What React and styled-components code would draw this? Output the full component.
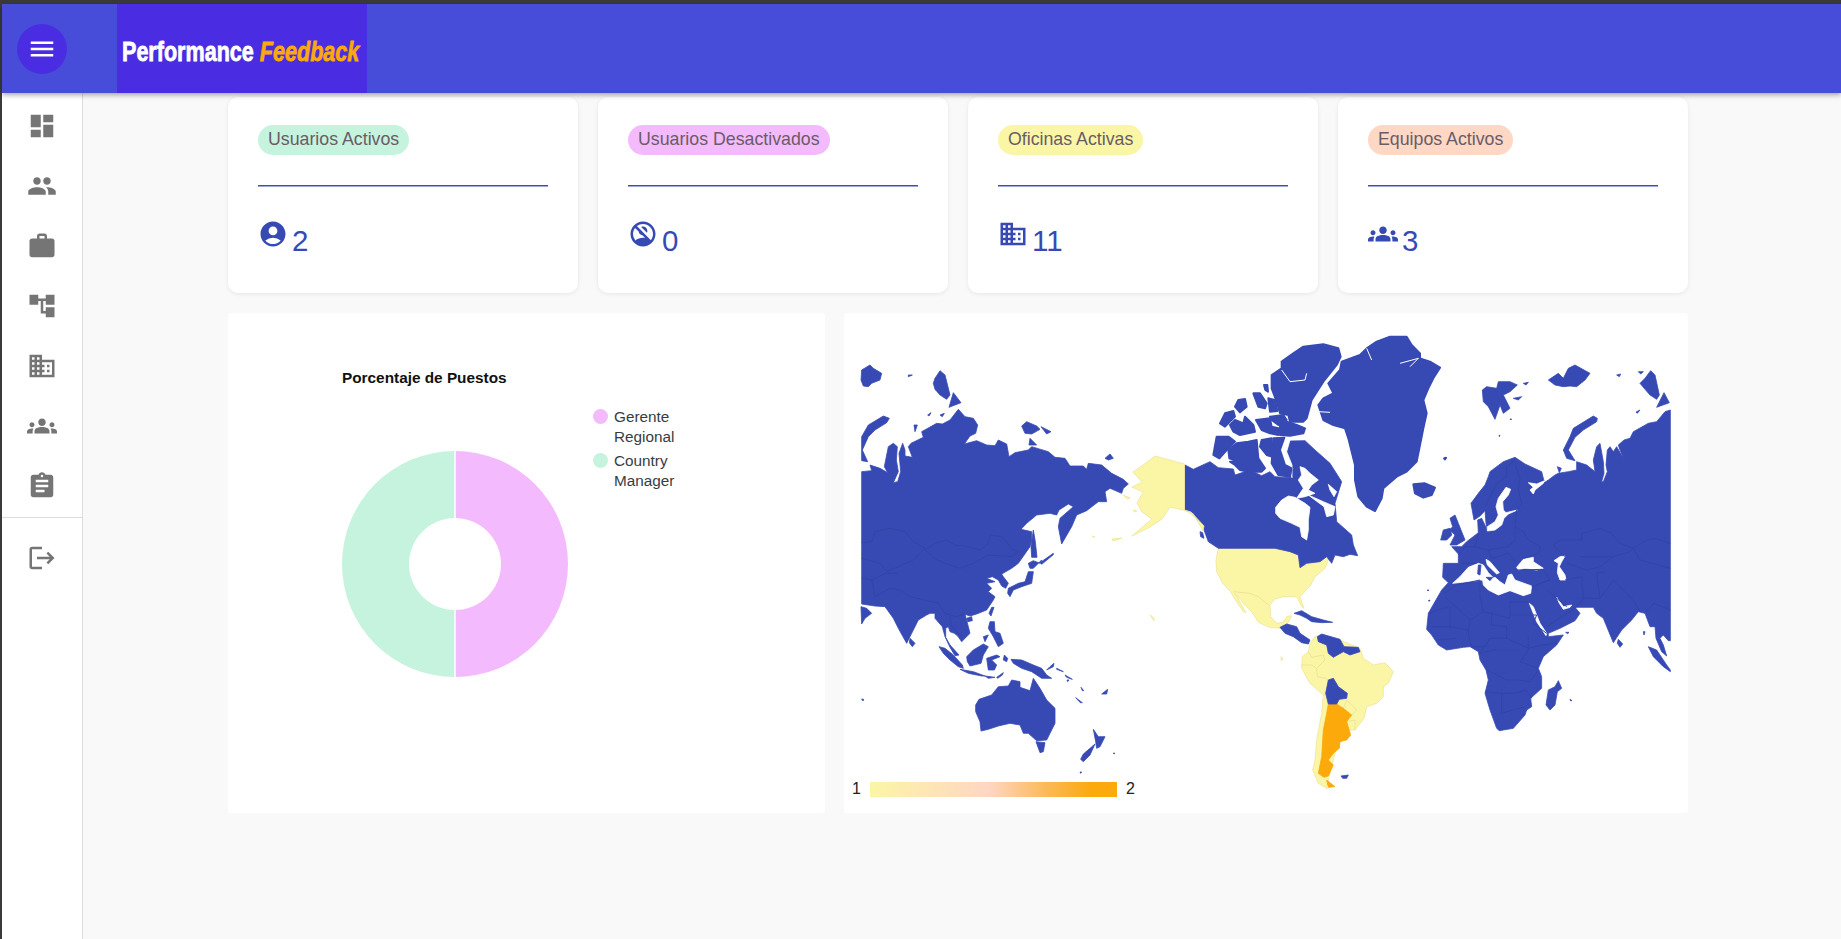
import React from 'react';
import styled, { createGlobalStyle } from 'styled-components';
import {
  MdAccountCircle,
  MdAccountTree,
  MdAssignment,
  MdBusiness,
  MdDashboard,
  MdGroups,
  MdLogout,
  MdMenu,
  MdNoAccounts,
  MdPeople,
  MdWork,
} from 'react-icons/md';

const BLUE = '#374ab4';
const BORDER = '#3044a8';

const GlobalStyle = createGlobalStyle`
  html, body {
    margin: 0;
    padding: 0;
    background: #3a3a3a;
    font-family: "Liberation Sans", Arial, sans-serif;
  }
  * {
    box-sizing: border-box;
  }
`;

const Page = styled.div`
  height: 939px;
  padding: 4px 0 0 2px;
  display: flex;
  flex-direction: column;
  overflow: hidden;
`;

const Header = styled.header`
  flex: 0 0 89px;
  display: flex;
  align-items: center;
  padding-left: 15px;
  background: #474cd9;
  box-shadow: 0 2px 5px rgba(0, 0, 0, 0.35);
  position: relative;
  z-index: 2;
`;

const MenuButton = styled.div`
  width: 50px;
  height: 50px;
  border-radius: 50%;
  background: #4a2de3;
  color: #fff;
  display: flex;
  align-items: center;
  justify-content: center;
  font-size: 30px;
`;

const Logo = styled.div`
  width: 250px;
  height: 89px;
  margin-left: 50px;
  padding: 7px 0 0 5px;
  background: #4a2de3;
  display: flex;
  align-items: center;
  overflow: hidden;
`;

const LogoText = styled.div`
  color: #fff;
  font-size: 28px;
  font-weight: 700;
  white-space: nowrap;
  transform: scaleX(0.77);
  transform-origin: left center;
  -webkit-text-stroke: 0.8px currentColor;

  em {
    color: #fba90b;
  }
`;

const Body = styled.div`
  flex: 1;
  display: flex;
  min-height: 0;
`;

const Sidebar = styled.nav`
  flex: 0 0 81px;
  background: #fff;
  border-right: 1px solid #dcdcdc;
  padding-top: 3px;
  color: #757575;
`;

const NavItem = styled.div`
  height: 60px;
  display: flex;
  align-items: center;
  justify-content: center;
  font-size: 30px;
`;

const NavDivider = styled.div`
  height: 1px;
  margin: 1px 0 10px;
  background: #dcdcdc;
`;

const Main = styled.main`
  flex: 1;
  background: #f9f9f9;
  padding: 4px 153px 0 145px;
`;

const StatGrid = styled.div`
  display: grid;
  grid-template-columns: repeat(4, 350px);
  gap: 20px;
`;

const StatCard = styled.section`
  height: 196px;
  padding: 28px 30px 0;
  background: #fff;
  border-radius: 10px;
  box-shadow: 0 1px 4px rgba(0, 0, 0, 0.08);
`;

const Pill = styled.span`
  display: inline-block;
  height: 30px;
  padding: 0 10px;
  line-height: 28px;
  border-radius: 15px;
  font-size: 17.75px;
  color: #6a5c66;
  background: ${(props) => props.$color};
`;

const Rule = styled.div`
  height: 1px;
  margin-top: 30px;
  background: #3f4eb5;
  box-shadow: 0 0.5px 0 #3f4eb5;
`;

const StatValue = styled.div`
  display: flex;
  align-items: flex-start;
  gap: 4px;
  margin-top: 33px;
  color: ${BLUE};
  font-size: 30px;
  height: 32px;

  span {
    font-size: 29.5px;
    line-height: 29px;
    margin-top: 7px;
  }
`;

const ChartGrid = styled.div`
  display: grid;
  grid-template-columns: 597px 844px;
  gap: 19px;
  margin-top: 20px;
`;

const PieCard = styled.section`
  height: 500px;
  padding-left: 114px;
  display: flex;
  background: #fff;
  border-radius: 3px;
`;

const PieColumn = styled.div`
  width: 251px;
  padding-top: 56px;
`;

const PieTitle = styled.h3`
  margin: 0 0 63px;
  font-size: 15.35px;
  line-height: 18px;
  font-weight: 700;
  color: #111;
`;

const Donut = styled.svg`
  display: block;
  width: 228px;
  height: 228px;
  margin-left: -1px;
`;

const Legend = styled.div`
  padding-top: 94px;
  display: flex;
  flex-direction: column;
  gap: 4px;
`;

const LegendItem = styled.div`
  display: flex;
  gap: 6px;
  font-size: 15.3px;
  line-height: 20px;
  width: 90px;
  color: #373d3f;
`;

const LegendDot = styled.i`
  flex: 0 0 15px;
  height: 15px;
  margin-top: 2px;
  border-radius: 50%;
  background: ${(props) => props.$color};
`;

const MapCard = styled.section`
  height: 500px;
  position: relative;
  background: #fff;
  border-radius: 3px;
`;

const MapSvg = styled.svg`
  display: block;
  width: 844px;
  height: 500px;
`;

const Shape = styled.polygon`
  fill: ${(props) => props.$fill};
  stroke: ${(props) => props.$stroke};
  stroke-width: ${(props) => props.$width || 0.8};
  stroke-linejoin: round;
  vector-effect: non-scaling-stroke;
`;

const Line = styled.polyline`
  fill: none;
  stroke: ${(props) => props.$stroke};
  stroke-width: ${(props) => props.$width || 1};
  stroke-linejoin: round;
  vector-effect: non-scaling-stroke;
`;

const Scale = styled.div`
  position: absolute;
  left: 8px;
  bottom: 15px;
  display: flex;
  align-items: center;
  gap: 9px;
  font-size: 16px;
  color: #222;
`;

const ScaleBar = styled.div`
  width: 247px;
  height: 15px;
  background: linear-gradient(90deg, #fbf6a6 0%, #ffd6c4 48%, #fbb955 72%, #fba90b 90%);
`;

// all map outlines are traced from crops of the map, each frame is one crop (3x)
const frames = [
  {
    x: 855,
    y: 350,
    s: 1 / 3,
    land: [
      '20,365 50,362 45,345 75,355 98,368 88,350 100,290 115,280 127,290 124,330 130,365 115,398 128,395 137,365 132,310 143,280 150,300 150,318 172,322 160,290 168,280 205,262 200,245 245,220 262,222 285,210 310,178 330,200 355,205 368,225 362,250 345,258 328,282 365,272 395,285 420,287 430,270 455,282 462,320 480,308 520,300 530,290 580,305 600,322 630,325 645,348 685,348 695,358 700,340 740,345 770,370 805,388 820,402 805,415 800,430 765,415 750,425 755,455 730,455 695,482 665,495 650,530 620,582 610,530 615,505 655,470 640,462 612,480 605,495 585,490 545,495 515,520 498,538 530,545 530,570 525,590 490,640 470,655 440,672 445,680 460,700 452,715 440,708 430,690 412,680 395,685 420,695 395,700 410,715 400,725 420,740 415,750 395,780 365,792 345,798 330,793 340,830 345,850 320,875 308,858 298,850 285,845 280,830 272,835 272,862 285,885 312,915 300,917 285,892 270,860 262,830 240,805 240,790 225,790 215,795 190,810 170,850 155,880 130,835 115,805 90,770 60,768 20,762',
      '18,770 35,775 50,790 30,805 20,822',
      '20,260 40,225 85,198 103,205 95,218 60,240 40,260 22,300 38,335 20,332',
      '20,60 45,45 55,55 80,70 75,90 50,100 40,110 25,108 18,90',
      '235,100 240,85 255,62 270,75 285,135 275,148 255,135 240,118',
      '295,128 318,158 282,172',
      '500,228 515,215 545,228 555,238 530,252 510,250',
      '558,230 588,245 575,252',
      '525,265 545,285 522,285',
      '160,75 172,75 160,80',
      '177,225 187,225 180,245',
      '750,325 765,312 775,325 760,330',
      '255,195 268,190 262,200',
      '218,195 228,188 222,198',
      '535,540 541,575 546,622 530,622 528,590',
      '520,640 535,632 555,640 560,630 535,655 525,655',
      '460,715 490,700 510,695 520,665 535,665 530,700 500,710 475,720 465,740 458,730',
      '555,638 595,610 595,614 560,643',
      '410,772 417,772 408,798 402,790',
      '335,805 350,800 352,812 338,815',
      '165,865 180,880 172,890 163,878',
    ],
    borders: [
      '210,600 240,580 275,570 300,585 340,590 375,600 400,580 405,555 440,560 475,600 490,605 470,620 400,615 355,640 315,655 270,640 240,625 210,600',
      '20,578 50,575 60,545 105,535 150,545 175,575 210,595 175,630 130,650 95,665 75,640 20,625',
      '20,685 50,690 90,670 130,670',
      '50,690 60,740 105,715 135,720 165,740 250,760 270,790',
      '270,790 300,800 330,793',
      '285,800 290,830 320,860',
    ],
  },
  {
    x: 855,
    y: 600,
    s: 1 / 3,
    land: [
      '252,140 270,145 295,165 322,195 325,205 310,200 285,180 265,160',
      '315,208 355,215 390,228 380,228 340,220',
      '335,170 355,150 385,132 400,140 385,165 378,190 345,198 337,185',
      '395,175 425,165 435,170 410,180 425,195 418,210 400,210',
      '405,65 418,65 420,95 435,100 445,130 430,140 415,110 400,85',
      '468,178 500,180 535,195 560,205 575,225 590,235 560,235 530,215 500,205 475,190',
      '425,232 445,218 442,225 428,235',
      '448,165 458,175 455,185 445,180',
      '390,228 420,232 400,235',
      '385,110 400,105 390,125',
      '585,200 597,190 595,200 575,210',
      '605,205 625,215 605,208',
      '630,225 652,238 635,232',
      '636,240 642,240 638,245',
      '678,262 686,272 682,272',
      '740,282 758,268 755,282',
      '662,293 682,308 676,308',
      '362,315 372,298 410,285 430,260 460,258 470,240 495,245 495,262 525,272 535,235 555,265 575,300 600,325 600,370 585,400 575,420 545,422 520,400 505,400 495,375 465,370 430,378 400,388 378,393 375,365 362,335',
      '543,425 570,428 565,455 555,458',
      '715,388 730,410 750,410 735,440 725,445 722,425',
      '720,432 705,465 685,485 677,478 685,462 705,445',
      '20,297 26,298 24,303',
      '675,516 680,516 677,520',
      '775,459 780,460 777,462',
    ],
  },
  {
    x: 1180,
    y: 420,
    s: 1 / 3,
    yellow: [
      '115,385 285,380 330,395 355,405 360,443 400,425 425,415 445,400 445,420 435,445 405,470 392,495 370,520 360,530 372,565 365,560 350,530 310,530 285,537 270,555 272,590 290,610 308,607 322,588 335,588 322,612 302,625 268,622 235,607 215,575 195,555 165,520 198,578 190,575 160,530 152,515 128,490 110,455 108,420',
      '405,650 420,645 480,660 540,685 550,715 580,735 615,728 640,755 625,790 610,800 610,830 590,850 560,860 552,895 525,930 505,930 470,980 440,1100 445,1108 415,1090 398,1050 405,1020 410,960 425,880 430,825 390,790 365,745 367,710 385,695 390,670',
      '303,710 310,718 304,722',
    ],
    orange: [
      '445,852 470,852 490,865 515,885 500,905 512,945 500,960 480,965 478,985 460,1000 445,1020 460,1035 445,1068 432,1072 415,1060 425,1010 430,930 440,880',
      '440,1080 465,1100 445,1102',
    ],
    land: [
      '15,135 40,148 90,125 115,143 160,147 165,165 210,150 245,167 270,155 285,170 330,173 340,145 315,110 313,80 330,63 375,62 405,90 450,130 485,185 465,250 470,305 515,345 520,375 533,407 510,403 490,410 465,405 455,430 440,410 420,425 380,430 360,443 355,405 330,395 285,385 115,385 85,365 72,330 40,280 15,270',
      '300,622 320,612 350,620 360,640 390,660 385,672 365,668 340,650 315,640',
      '342,580 365,572 395,590 430,600 458,607 425,608 395,605 380,595 360,585',
      '412,650 425,642 480,658 492,680 535,682 540,695 510,705 490,695 460,712 445,700 440,675 415,665',
      '445,780 460,775 475,800 502,820 500,835 478,838 470,852 445,852 437,820',
      '483,1068 505,1065 500,1075 488,1075',
      '60,335 68,338 72,355 62,350',
    ],
    water: ['447,382 505,365 490,395 460,405'],
    yellowLines: [
      '365,735 395,735 410,745 435,720 430,705 395,712 385,695',
      '410,745 412,770 437,775 445,780',
      '437,820 430,825',
      '490,865 500,840 530,870 515,885',
      '500,905 525,900 525,930',
      '160,515 210,520 235,530 265,555',
      '302,625 322,612',
    ],
  },
  {
    x: 0,
    y: 0,
    s: 1,
    yellow: [
      '1155,456 1184.5,464 1184.5,510 1191,512 1204,526 1203,531 1196,518 1187,511 1170,507 1162,519 1150,527 1132,536 1152,519 1142,512 1137,503 1143,492 1132,487 1142,482 1133,472 1143,465',
      '1123,495 1130,498 1127,499',
      '1133,510 1137,511 1135,512',
      '1092,536 1095,537 1093,537',
      '1112,539 1122,538 1113,541',
      '1150,615 1154,618 1154,621',
    ],
  },
  {
    x: 1190,
    y: 325,
    s: 1 / 3,
    landWidth: 2,
    water: [
      '257,547 275,525 295,513 315,517 345,535 360,547 355,585 355,615 350,645 335,635 330,607 305,595 270,580 257,565',
      '330,425 345,430 360,445 385,465 365,480 355,495 375,505 345,515 320,520 340,490 325,465 335,450',
      '415,478 440,500 432,515 420,495',
      '355,510 400,530 435,545 430,570 410,575 402,545 375,525',
      '283,350 300,345 290,380 306,420 306,458 295,430 280,395',
    ],
    land: [
      '70,390 80,335 115,335 135,350 110,375 88,400',
      '115,375 140,355 175,350 200,345 205,400 225,430 215,440 175,440 150,435 135,420 120,410 145,410 118,400',
      '215,345 245,340 245,395 230,390 210,365',
      '250,340 283,338 270,375 285,420 305,430 300,455 265,450 245,415',
      '90,295 105,265 130,258 135,275 120,290 105,305',
      '120,300 135,285 160,295 165,275 190,300 195,320 150,330 130,320',
      '145,225 165,222 170,245 150,262 135,245',
      '198,285 240,280 245,305 265,310 265,330 240,325 215,315',
      '190,205 210,205 230,235 225,250 205,245',
      '235,220 255,225 262,258 240,260',
      '270,300 290,290 320,300 345,310 340,325 300,332 270,330',
      '240,275 280,270 290,285 265,300 245,285',
      '245,150 275,130 275,110 310,85 340,65 400,58 445,70 452,95 440,120 400,170 365,225 350,280 340,290 300,290 295,270 270,265 260,230 245,190',
      '222,180 232,180 234,200 226,195',
      '530,70 560,50 600,35 650,35 665,60 690,85 690,100 720,110 750,128 730,160 715,190 700,225 710,265 700,310 690,360 680,410 650,440 620,455 580,490 575,520 555,558 530,545 505,515 495,465 495,420 475,340 465,310 430,300 400,285 385,240 400,220 430,205 415,175 450,135 455,110 510,90',
      '670,478 705,475 735,488 725,510 700,518 675,505',
      '762,400 768,398 765,403',
    ],
    waterLines: [
      '275,135 300,170 345,165 350,145',
      '630,115 685,100 660,125',
      '530,70 545,105',
      '385,260 420,262',
    ],
  },
  {
    x: 1400,
    y: 350,
    s: 1 / 3,
    land: [
      '811,180 795,185 770,215 745,220 700,245 690,265 672,270 655,285 660,300 670,325 650,290 640,305 630,290 622,300 618,345 622,365 610,395 605,395 612,370 610,335 600,280 590,290 580,330 585,365 560,345 530,335 530,360 505,365 475,370 465,375 445,390 430,400 405,420 400,432 390,420 400,412 385,398 410,402 432,393 425,365 375,342 345,322 310,335 270,365 265,380 255,405 235,430 213,460 222,510 240,498 255,482 258,520 262,540 245,505 233,510 235,548 200,575 185,590 155,590 175,612 175,640 130,640 128,682 145,698 125,720 85,790 80,838 95,855 115,885 140,900 190,892 210,890 235,905 240,930 258,960 265,990 255,1030 270,1080 290,1135 298,1142 340,1135 375,1095 380,1080 395,1070 392,1045 425,1015 425,980 415,955 430,920 470,885 490,855 445,860 445,850 480,835 525,812 540,790 525,772 580,772 590,790 610,805 640,878 665,840 695,810 715,785 735,790 750,830 765,830 768,865 785,905 800,918 790,885 780,865 790,855 805,872 811,872',
    ],
    water: [
      '318,412 332,418 325,435 308,455 310,480 318,488 352,480 325,492 312,505 305,525 285,540 262,543 262,530 285,515 295,495 288,470 295,445',
      '158,700 180,680 205,652 235,640 250,645 265,668 280,683 270,690 248,690',
      '248,690 270,690 285,682 300,695 315,705 325,675 335,672 345,690 395,708 392,730 370,737 330,722 295,735 265,720 250,705',
      '258,628 270,635 298,668 290,672 262,645',
      '350,652 370,628 400,622 400,635 430,655 410,660 375,655 355,660',
      '462,632 480,620 495,618 485,635 478,650 495,675 498,690 480,690 472,668 475,640',
      '388,760 400,770 420,820 440,850 438,857 410,815',
      '470,742 490,770 515,765 510,772 490,778 478,760',
      '385,398 410,402 432,393 430,400 405,420 400,432 390,420 400,412',
    ],
    islands: [
      '235,645 243,645 240,675 233,672',
      '258,682 278,682 270,692',
      '150,505 165,495 175,520 195,570 170,585 150,585 165,555 148,540 158,530',
      '122,570 130,540 150,535 155,555 140,570',
      '247,120 260,110 290,115 295,95 330,95 352,105 330,125 310,135 330,175 310,190 300,165 285,208 265,170 250,155',
      '445,90 475,70 490,85 505,55 525,45 570,70 555,90 530,110 510,108 490,110 465,105',
      '720,100 735,85 752,62 765,75 778,135 770,148 750,135 735,118',
      '792,128 808,158 770,172',
      '490,300 510,260 520,235 580,198 592,205 590,215 550,240 525,262 505,300 525,332 500,325',
      '132,325 138,323 136,328',
      '370,100 385,97 378,105',
      '650,75 662,72 658,80',
      '715,65 730,65 722,72',
      '472,350 484,355 478,368',
      '340,145 365,140 355,150',
      '475,992 485,1015 472,1025 465,1065 450,1080 438,1065 445,1020 465,1010',
      '655,868 668,882 660,892 652,880',
      '745,890 770,900 800,945 811,960 811,965 790,950 760,920',
      '497,847 507,847 503,851',
      '510,1048 516,1052 511,1052',
      '82,720 87,720 84,723',
      '85,752 90,750 88,754',
      '730,845 735,845 732,855',
      '297,256 300,256 298,260',
      '330,207 335,207 332,210',
      '720,180 712,190 708,186',
    ],
    borders: [
      '345,330 320,350 320,380 290,400 255,470',
      '345,345 360,385 355,420 365,460 350,480',
      '350,480 345,530 370,545 385,570 420,590 415,610 370,625',
      '235,550 225,590 265,600 325,590 345,570 345,530',
      '225,590 195,590 175,615',
      '265,600 275,625 325,610 350,640',
      '350,660 430,658 450,690 395,710',
      '495,620 460,585 480,570 545,570 545,550 600,535 635,550 660,580 700,595 740,570 765,565 811,580',
      '540,620 640,620 690,605 700,595',
      '700,595 720,630 811,655',
      '640,620 600,650 560,660 500,640',
      '495,690 545,680 550,745 525,775',
      '545,745 600,745 590,670 615,665',
      '600,745 640,690 700,750 720,785',
      '735,790 760,760 811,780',
      '180,640 230,640',
    ],
    landFirst: true,
  },
  {
    x: 1400,
    y: 570,
    s: 1 / 3,
    borders: [
      '135,70 170,45 240,30',
      '135,80 210,150 250,125 240,80 240,30',
      '250,125 330,145 330,95 385,95',
      '330,135 410,135 400,160 440,190',
      '210,150 205,190 215,230 255,230 270,205 320,205 320,170 275,165 275,125',
      '320,205 385,235 425,225 470,220',
      '385,200 385,240 360,275 415,295',
      '270,205 240,250 280,240 360,240',
      '260,300 320,330 355,330 390,335 415,300',
      '255,365 305,370 340,370 380,360 395,385',
      '305,370 305,430 340,420 375,410',
      '95,170 150,170 205,180',
      '150,110 150,175',
      '85,130 145,110',
      '115,210 170,205',
      '395,60 420,40 450,30',
      '440,170 500,130 525,115',
      '440,60 500,110',
    ],
  },
];

const MapFrame = ({ frame }) => {
  const land = (frame.land || []).map((p) => (
    <Shape key={p} points={p} $fill={BLUE} $stroke={BLUE} $width={frame.landWidth} />
  ));
  return (
    <g transform={`translate(${frame.x} ${frame.y}) scale(${frame.s})`}>
      {(frame.yellow || []).map((p) => (
        <Shape key={p} points={p} $fill="#fbf6a6" $stroke="#efe49c" />
      ))}
      {(frame.yellowLines || []).map((p) => (
        <Line key={p} points={p} $stroke="#efe49c" />
      ))}
      {(frame.orange || []).map((p) => (
        <Shape key={p} points={p} $fill="#fba90b" $stroke="#fba90b" />
      ))}
      {/* europe's land goes under its seas, the arctic islands go over theirs */}
      {frame.landFirst && land}
      {(frame.water || []).map((p) => (
        <Shape key={p} points={p} $fill="#fff" $stroke="#fff" />
      ))}
      {!frame.landFirst && land}
      {(frame.waterLines || []).map((p) => (
        <Line key={p} points={p} $stroke="#fff" />
      ))}
      {(frame.islands || []).map((p) => (
        <Shape key={p} points={p} $fill={BLUE} $stroke={BLUE} />
      ))}
      {(frame.borders || []).map((p) => (
        <Line key={p} points={p} $stroke={BORDER} />
      ))}
    </g>
  );
};

const navItems = [
  MdDashboard,
  MdPeople,
  MdWork,
  MdAccountTree,
  MdBusiness,
  MdGroups,
  MdAssignment,
];

const stats = [
  { label: 'Usuarios Activos', color: '#c6f3de', Icon: MdAccountCircle, value: 2 },
  { label: 'Usuarios Desactivados', color: '#f3bbfd', Icon: MdNoAccounts, value: 0 },
  { label: 'Oficinas Activas', color: '#fbf6a6', Icon: MdBusiness, value: 11 },
  { label: 'Equipos Activos', color: '#fed7c5', Icon: MdGroups, value: 3 },
];

const App = () => {
  return (
    <Page>
      <GlobalStyle />
      <Header>
        <MenuButton>
          <MdMenu />
        </MenuButton>
        <Logo>
          <LogoText>
            Performance <em>Feedback</em>
          </LogoText>
        </Logo>
      </Header>
      <Body>
        <Sidebar>
          {navItems.map((Icon, i) => (
            <NavItem key={i}>
              <Icon />
            </NavItem>
          ))}
          <NavDivider />
          <NavItem>
            <MdLogout />
          </NavItem>
        </Sidebar>
        <Main>
          <StatGrid>
            {stats.map(({ label, color, Icon, value }) => (
              <StatCard key={label}>
                <Pill $color={color}>{label}</Pill>
                <Rule />
                <StatValue>
                  <Icon />
                  <span>{value}</span>
                </StatValue>
              </StatCard>
            ))}
          </StatGrid>
          <ChartGrid>
            <PieCard>
              <PieColumn>
                <PieTitle>Porcentaje de Puestos</PieTitle>
                <Donut viewBox="-114 -114 228 228">
                  <path d="M0 -113 A113 113 0 0 1 0 113 L0 46 A46 46 0 0 0 0 -46 Z" fill="#f3bbfd" />
                  <path d="M0 113 A113 113 0 0 1 0 -113 L0 -46 A46 46 0 0 0 0 46 Z" fill="#c6f3de" />
                  <path d="M0 -113 V-46 M0 46 V113" stroke="#fff" strokeWidth="1.5" />
                </Donut>
              </PieColumn>
              <Legend>
                <LegendItem>
                  <LegendDot $color="#f3bbfd" />
                  <span>Gerente Regional</span>
                </LegendItem>
                <LegendItem>
                  <LegendDot $color="#c6f3de" />
                  <span>Country Manager</span>
                </LegendItem>
              </Legend>
            </PieCard>
            <MapCard>
              <MapSvg viewBox="844 313 844 500">
                {frames.map((frame) => (
                  <MapFrame key={`${frame.x}-${frame.y}`} frame={frame} />
                ))}
              </MapSvg>
              <Scale>
                <span>1</span>
                <ScaleBar />
                <span>2</span>
              </Scale>
            </MapCard>
          </ChartGrid>
        </Main>
      </Body>
    </Page>
  );
};

export default App;
